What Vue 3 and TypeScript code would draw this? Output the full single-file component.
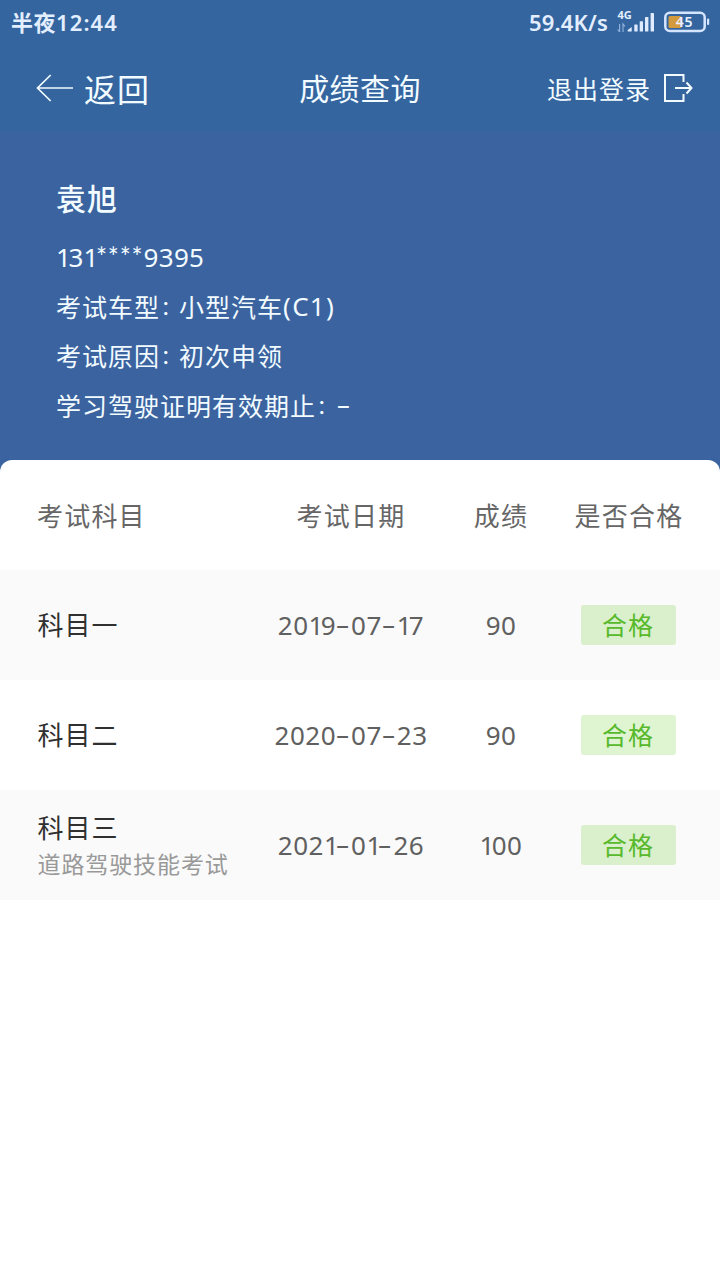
<script setup lang="ts">
interface ExamRow {
  subject: string
  note?: string
  date: string
  score: string
  result: string
}

interface InfoLine {
  label: string
  value: string
  suffix?: string
}

const phone = '131****9395'

const info: InfoLine[] = [
  { label: '考试车型', value: '小型汽车', suffix: '(C1)' },
  { label: '考试原因', value: '初次申领' },
  { label: '学习驾驶证明有效期止', value: '', suffix: '-' },
]

const rows: ExamRow[] = [
  { subject: '科目一', date: '2019-07-17', score: '90', result: '合格' },
  { subject: '科目二', date: '2020-07-23', score: '90', result: '合格' },
  { subject: '科目三', note: '道路驾驶技能考试', date: '2021-01-26', score: '100', result: '合格' },
]
</script>

<template>
  <div class="page">
    <header class="top">
      <div class="status">
        <div class="clock"><span class="clock-cn">半夜</span><span>12:44</span></div>
        <div class="status-right">
          <span class="speed">59.4K/s</span>
          <svg class="signal" width="38" height="34" viewBox="0 -6 38 34">
            <text x="0.500" y="8" class="net">4G</text>
            <g fill="none" stroke="#8fb0dc" stroke-width="1.2">
              <path d="M2.600 13v8M.6 18.500l2 2.500M6 21v-8l2 2.500" />
            </g>
            <g fill="#dfebff">
              <path d="M10.700 20.500v-1.500l4-3v4.500z" />
              <rect x="17.300" y="13.500" width="3.300" height="7" rx=".6" />
              <rect x="22.700" y="10.200" width="3.300" height="10.300" rx=".6" />
              <rect x="28" y="6" width="3.400" height="14.500" rx=".6" />
              <rect x="33.600" y="2" width="3.400" height="18.500" rx=".6" />
            </g>
          </svg>
          <svg class="battery" width="46" height="22" viewBox="0 0 46 22">
            <rect x="1.300" y="1.800" width="39.400" height="18.200" rx="4.500" fill="none" stroke="#d5e5ff" stroke-width="2.500" />
            <rect x="4.500" y="5" width="13" height="12" rx="1.500" fill="#d29a3c" />
            <rect x="43" y="7.500" width="2.200" height="6.500" rx="1" fill="#d5e5ff" />
            <text x="20.500" y="16.200" text-anchor="middle" class="level">45</text>
          </svg>
        </div>
      </div>
      <nav class="nav">
        <div class="back">
          <svg width="38" height="28" viewBox="0 0 38 28" fill="none" stroke="#f2fbff" stroke-width="1.700">
            <path d="M37 14H1.500M14.700 1 1.500 14l13.200 13" />
          </svg>
          <span class="back-text">返回</span>
        </div>
        <h1 class="title">成绩查询</h1>
        <div class="logout">
          <span>退出登录</span>
          <svg width="30" height="30" viewBox="0 0 30 30" fill="none" stroke="#f2fbff" stroke-width="2">
            <path d="M20.500 9V2H2v26h18.500v-7" />
            <path d="M12 15h16M23.500 9.500l5 5.500-5 5.500" />
          </svg>
        </div>
      </nav>
    </header>

    <section class="hero">
      <div class="name">袁旭</div>
      <div class="line phone"><span v-for="(ch, i) in phone" :key="i" :class="{ one: ch === '1', star: ch === '*' }">{{ ch }}</span></div>
      <div v-for="item in info" :key="item.label" class="line">
        <span>{{ item.label }}</span><span class="colon">：</span><span v-if="item.value">{{ item.value }}</span><span
          v-if="item.suffix" class="suffix" :class="{ dash: item.suffix === '-' }">{{ item.suffix }}</span>
      </div>
    </section>

    <main class="card">
      <div class="row head">
        <span>考试科目</span><span>考试日期</span><span>成绩</span><span>是否合格</span>
      </div>
      <div v-for="row in rows" :key="row.subject" class="row">
        <div class="subject">
          <div class="subject-name">{{ row.subject }}</div>
          <div v-if="row.note" class="note">{{ row.note }}</div>
        </div>
        <div class="num"><span v-for="(ch, i) in row.date" :key="i" :class="{ dash: ch === '-', one: ch === '1' }">{{ ch }}</span></div>
        <div class="num"><span v-for="(ch, i) in row.score" :key="i" :class="{ one: ch === '1' }">{{ ch }}</span></div>
        <div class="badge">{{ row.result }}</div>
      </div>
    </main>
  </div>
</template>

<style>
body {
  margin: 0;
  background: #fff;
}
</style>

<style scoped>
.page {
  width: 720px;
  height: 1280px;
  overflow: hidden;
  background: #3b63a0;
  font-family: "Noto Sans CJK SC", sans-serif;
  color: #f2fbff;
  display: flex;
  flex-direction: column;
}
.top {
  height: 132px;
  background: #34659f;
}
.status {
  height: 44px;
  display: flex;
  justify-content: space-between;
  padding: 0 10px 0 11px;
  align-items: center;
  color: #e3efff;
  font-family: "Noto Sans", "Noto Sans CJK SC", sans-serif;
  font-weight: 600;
  font-size: 22px;
  line-height: 44px;
}
.clock {
  display: flex;
  letter-spacing: 1.100px;
}
.clock-cn {
  letter-spacing: 0.5px;
  font-weight: 700;
}
.status-right {
  display: flex;
  align-items: center;
}
.speed {
  letter-spacing: 0.2px;
}
.signal {
  margin-left: 9px;
}
.net {
  font: 700 11px "Noto Sans", sans-serif;
  fill: #e3efff;
}
.battery {
  margin-left: 9px;
}
.level {
  font: 600 14px "Noto Sans", sans-serif;
  fill: #e8f1ff;
  letter-spacing: 0.8px;
}
.nav {
  height: 88px;
  display: grid;
  grid-template-columns: 240px 240px 240px;
  align-items: center;
}
.back {
  display: flex;
  align-items: center;
  padding-left: 36px;
  gap: 10px;
}
.back-text {
  font-size: 32px;
  letter-spacing: 1px;
  line-height: 40px;
}
.title {
  margin: 0;
  text-align: center;
  font-size: 30px;
  font-weight: 400;
  letter-spacing: 0.4px;
  line-height: 38px;
  padding-bottom: 2px;
}
.logout {
  display: flex;
  align-items: center;
  justify-content: flex-end;
  gap: 12px;
  padding-right: 27px;
  font-size: 25px;
  letter-spacing: 1px;
}
.hero {
  height: 328px;
  box-sizing: border-box;
  padding: 40px 56px 0;
}
.name {
  font-size: 30px;
  font-weight: 500;
  letter-spacing: 1px;
  line-height: 50px;
  margin-bottom: 10px;
}
.line {
  display: flex;
  font-size: 25px;
  letter-spacing: 1px;
  line-height: 49.500px;
  height: 49.500px;
}
.phone {
  font-family: "Noto Sans", sans-serif;
  font-size: 26px;
  line-height: 51px;
  letter-spacing: 0.3px;
}
.phone .one {
  letter-spacing: -2.500px;
}
.phone .star {
  font-family: Lato, sans-serif;
  font-size: 26px;
  letter-spacing: 0;
  width: 11.900px;
}
.colon {
  width: 19px;
  font-size: 19px;
  letter-spacing: 0;
  text-indent: 1px;
  font-weight: 500;
}
.suffix {
  font-family: "Noto Sans", sans-serif;
  font-size: 26px;
  letter-spacing: 1.300px;
}
.card {
  flex: 1;
  background: #fff;
  border-radius: 12px 12px 0 0;
  overflow: hidden;
}
.row {
  height: 110px;
  display: grid;
  grid-template-columns: 223px 180px 120px 134px;
  padding-left: 38px;
  align-items: center;
  justify-items: center;
  color: #666;
}
.row:nth-child(even) {
  background: #fafafa;
}
.head {
  font-size: 26px;
  letter-spacing: 1.200px;
}
.head span {
  padding-bottom: 2px;
}
.head span:first-child {
  justify-self: start;
  margin-left: -1px;
}
.head span:last-child {
  padding-left: 2px;
}
.subject {
  justify-self: start;
  margin-left: -0.500px;
  padding-bottom: 2px;
}
.subject-name {
  color: #303030;
  font-size: 26px;
  letter-spacing: 1px;
  line-height: 38px;
}
.note {
  color: #999;
  font-size: 23px;
  letter-spacing: 0.9px;
  line-height: 34px;
}
.num {
  display: flex;
  font-family: "Noto Sans", sans-serif;
  font-size: 26px;
  letter-spacing: 0.5px;
  color: #606060;
}
.num .one {
  letter-spacing: -2.800px;
}
.dash {
  display: inline-block;
  transform: translate(-0.800px, -1px) scaleX(1.700);
  transform-origin: center;
  letter-spacing: 0;
}
.suffix.dash {
  margin-left: 5px;
}
.num .dash {
  width: 15px;
  text-align: center;
  letter-spacing: 0;
}
.badge {
  width: 95px;
  height: 40px;
  box-sizing: border-box;
  border-radius: 3px;
  background: #daf0cc;
  color: #57b92b;
  font-size: 25px;
  letter-spacing: 1px;
  line-height: 39.500px;
  text-align: center;
}
.row:nth-child(odd) .badge {
  background: #dff4d1;
}
</style>
